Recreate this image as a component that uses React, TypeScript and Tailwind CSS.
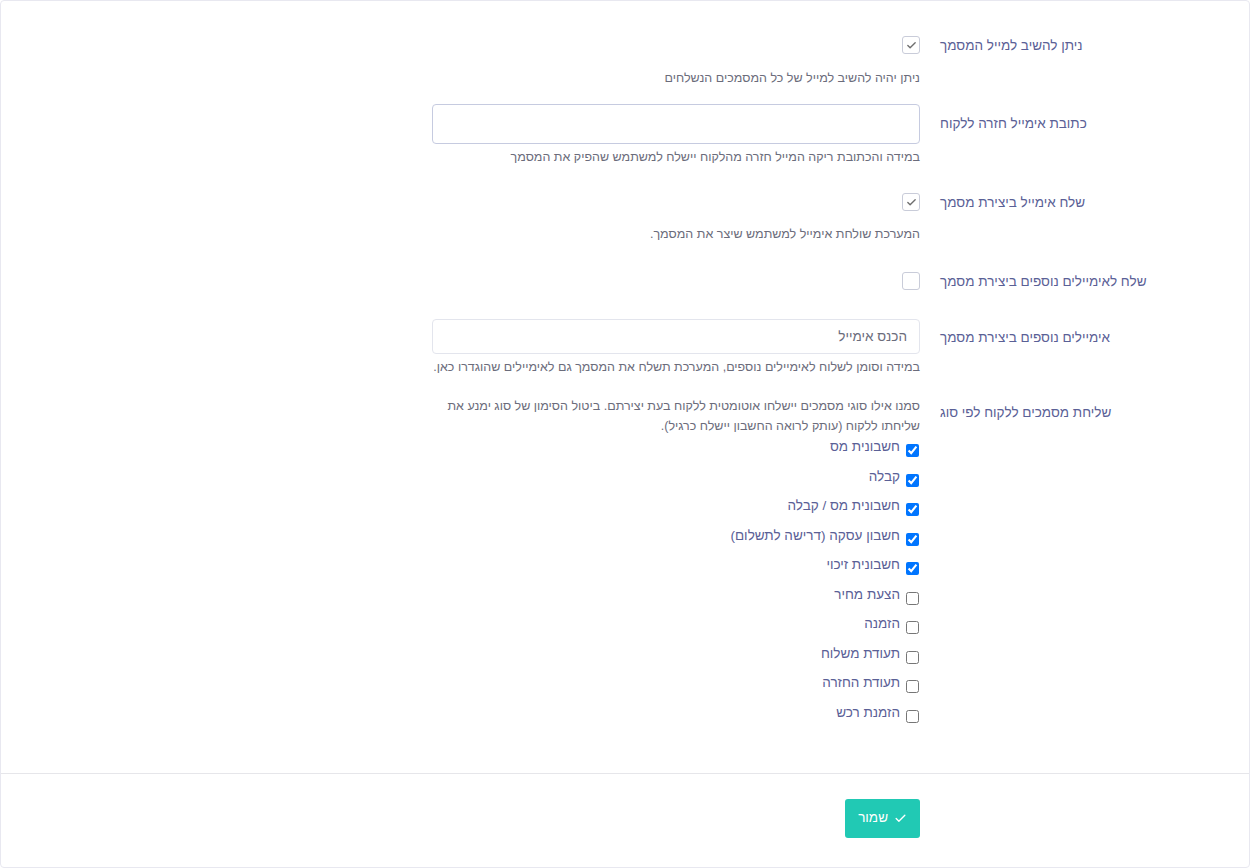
import { Check } from 'lucide-react'

const docTypes = [
  { name: 'חשבונית מס', on: true },
  { name: 'קבלה', on: true },
  { name: 'חשבונית מס / קבלה', on: true },
  { name: 'חשבון עסקה (דרישה לתשלום)', on: true },
  { name: 'חשבונית זיכוי', on: true },
  { name: 'הצעת מחיר', on: false },
  { name: 'הזמנה', on: false },
  { name: 'תעודת משלוח', on: false },
  { name: 'תעודת החזרה', on: false },
  { name: 'הזמנת רכש', on: false },
]

const labelCls = 'w-[309px] shrink-0 text-left text-[13.5px] leading-[21px] text-[#5a6096]'
const helpCls = 'text-[12.5px] leading-[20px] text-[#6b6c7b]'

function Toggle({ checked }: { checked: boolean }) {
  return (
    <span className="flex size-[18px] items-center justify-center rounded-[3px] border border-[#c9ccd9] bg-white">
      {checked && <Check className="size-[11px] text-[#6f6f6f]" strokeWidth={3} />}
    </span>
  )
}

export default function App() {
  return (
    <div
      dir="rtl"
      className="min-h-[868px] bg-white text-[#5a6096]"
      style={{ fontFamily: '"Liberation Sans", Arial, sans-serif' }}
    >
      <div className="flex min-h-[868px] flex-col rounded-[4px] border border-[#e8e8f0] bg-white">
        <div className="flex flex-col pt-[34px]">
          {/* reply to document email */}
          <div className="flex gap-5">
            <label className={labelCls}>ניתן להשיב למייל המסמך</label>
            <div className="flex w-[488px] flex-col">
              <div className="pt-[1px]">
                <Toggle checked />
              </div>
              <p className={`${helpCls} mt-[14px]`}>ניתן יהיה להשיב למייל של כל המסמכים הנשלחים</p>
            </div>
          </div>

          {/* customer reply address */}
          <div className="mt-[16px] flex gap-5">
            <label className={`${labelCls} pt-[9px]`}>כתובת אימייל חזרה ללקוח</label>
            <div className="flex w-[488px] flex-col">
              <input
                type="text"
                className="h-[40px] w-full rounded-[4px] border border-[#c6cbe0] bg-white px-3 text-[14px] outline-none"
              />
              <p className={`${helpCls} mt-[3px]`}>במידה והכתובת ריקה המייל חזרה מהלקוח יישלח למשתמש שהפיק את המסמך</p>
            </div>
          </div>

          {/* email on document creation */}
          <div className="mt-[26px] flex gap-5">
            <label className={`${labelCls} -mt-[1px]`}>שלח אימייל ביצירת מסמך</label>
            <div className="flex w-[488px] flex-col">
              <Toggle checked />
              <p className={`${helpCls} mt-[13px]`}>המערכת שולחת אימייל למשתמש שיצר את המסמך.</p>
            </div>
          </div>

          {/* extra recipients toggle */}
          <div className="mt-[28px] flex gap-5">
            <label className={`${labelCls} -mt-[1px]`}>שלח לאימיילים נוספים ביצירת מסמך</label>
            <div className="flex w-[488px] flex-col">
              <Toggle checked={false} />
            </div>
          </div>

          {/* extra recipients */}
          <div className="mt-[27px] flex gap-5">
            <label className={`${labelCls} pt-[8px]`}>אימיילים נוספים ביצירת מסמך</label>
            <div className="flex w-[488px] flex-col">
              <input
                type="text"
                placeholder="הכנס אימייל"
                className="h-[35px] w-full rounded-[4px] border border-[#e3e5ed] bg-white pr-[12px] pl-3 text-[13.5px] outline-none placeholder:text-[#6b6c7b]"
              />
              <p className={`${helpCls} mt-[3px]`}>במידה וסומן לשלוח לאימיילים נוספים, המערכת תשלח את המסמך גם לאימיילים שהוגדרו כאן.</p>
            </div>
          </div>

          {/* per-type sending */}
          <div className="mt-[19px] flex gap-5">
            <label className={`${labelCls} pt-[6px]`}>שליחת מסמכים ללקוח לפי סוג</label>
            <div className="flex w-[488px] flex-col">
              <p className={helpCls}>
                סמנו אילו סוגי מסמכים יישלחו אוטומטית ללקוח בעת יצירתם. ביטול הסימון של סוג ימנע את שליחתו ללקוח (עותק לרואה החשבון יישלח כרגיל).
              </p>
              <div className="mt-[1px] flex flex-col">
                {docTypes.map((t) => (
                  <label key={t.name} className="flex h-[29.55px] items-start">
                    <input
                      type="checkbox"
                      defaultChecked={t.on}
                      className="mt-[7px] mr-[1px] ml-[6px] size-[13px]"
                    />
                    <span className="text-[13.5px] leading-[20px] text-[#5a6096]">{t.name}</span>
                  </label>
                ))}
              </div>
            </div>
          </div>
        </div>

        {/* footer */}
        <div className="mt-auto border-t border-[#e6e6ea] pt-[25px] pb-[29px]">
          <div className="flex pr-[329px]">
            <button className="flex h-[39px] items-center gap-[6px] rounded-[3px] bg-[#21c9b4] pr-[13px] pl-[13px] text-[13.5px] text-white">
              <Check className="size-[13px]" strokeWidth={2.5} />
              שמור
            </button>
          </div>
        </div>
      </div>
    </div>
  )
}
